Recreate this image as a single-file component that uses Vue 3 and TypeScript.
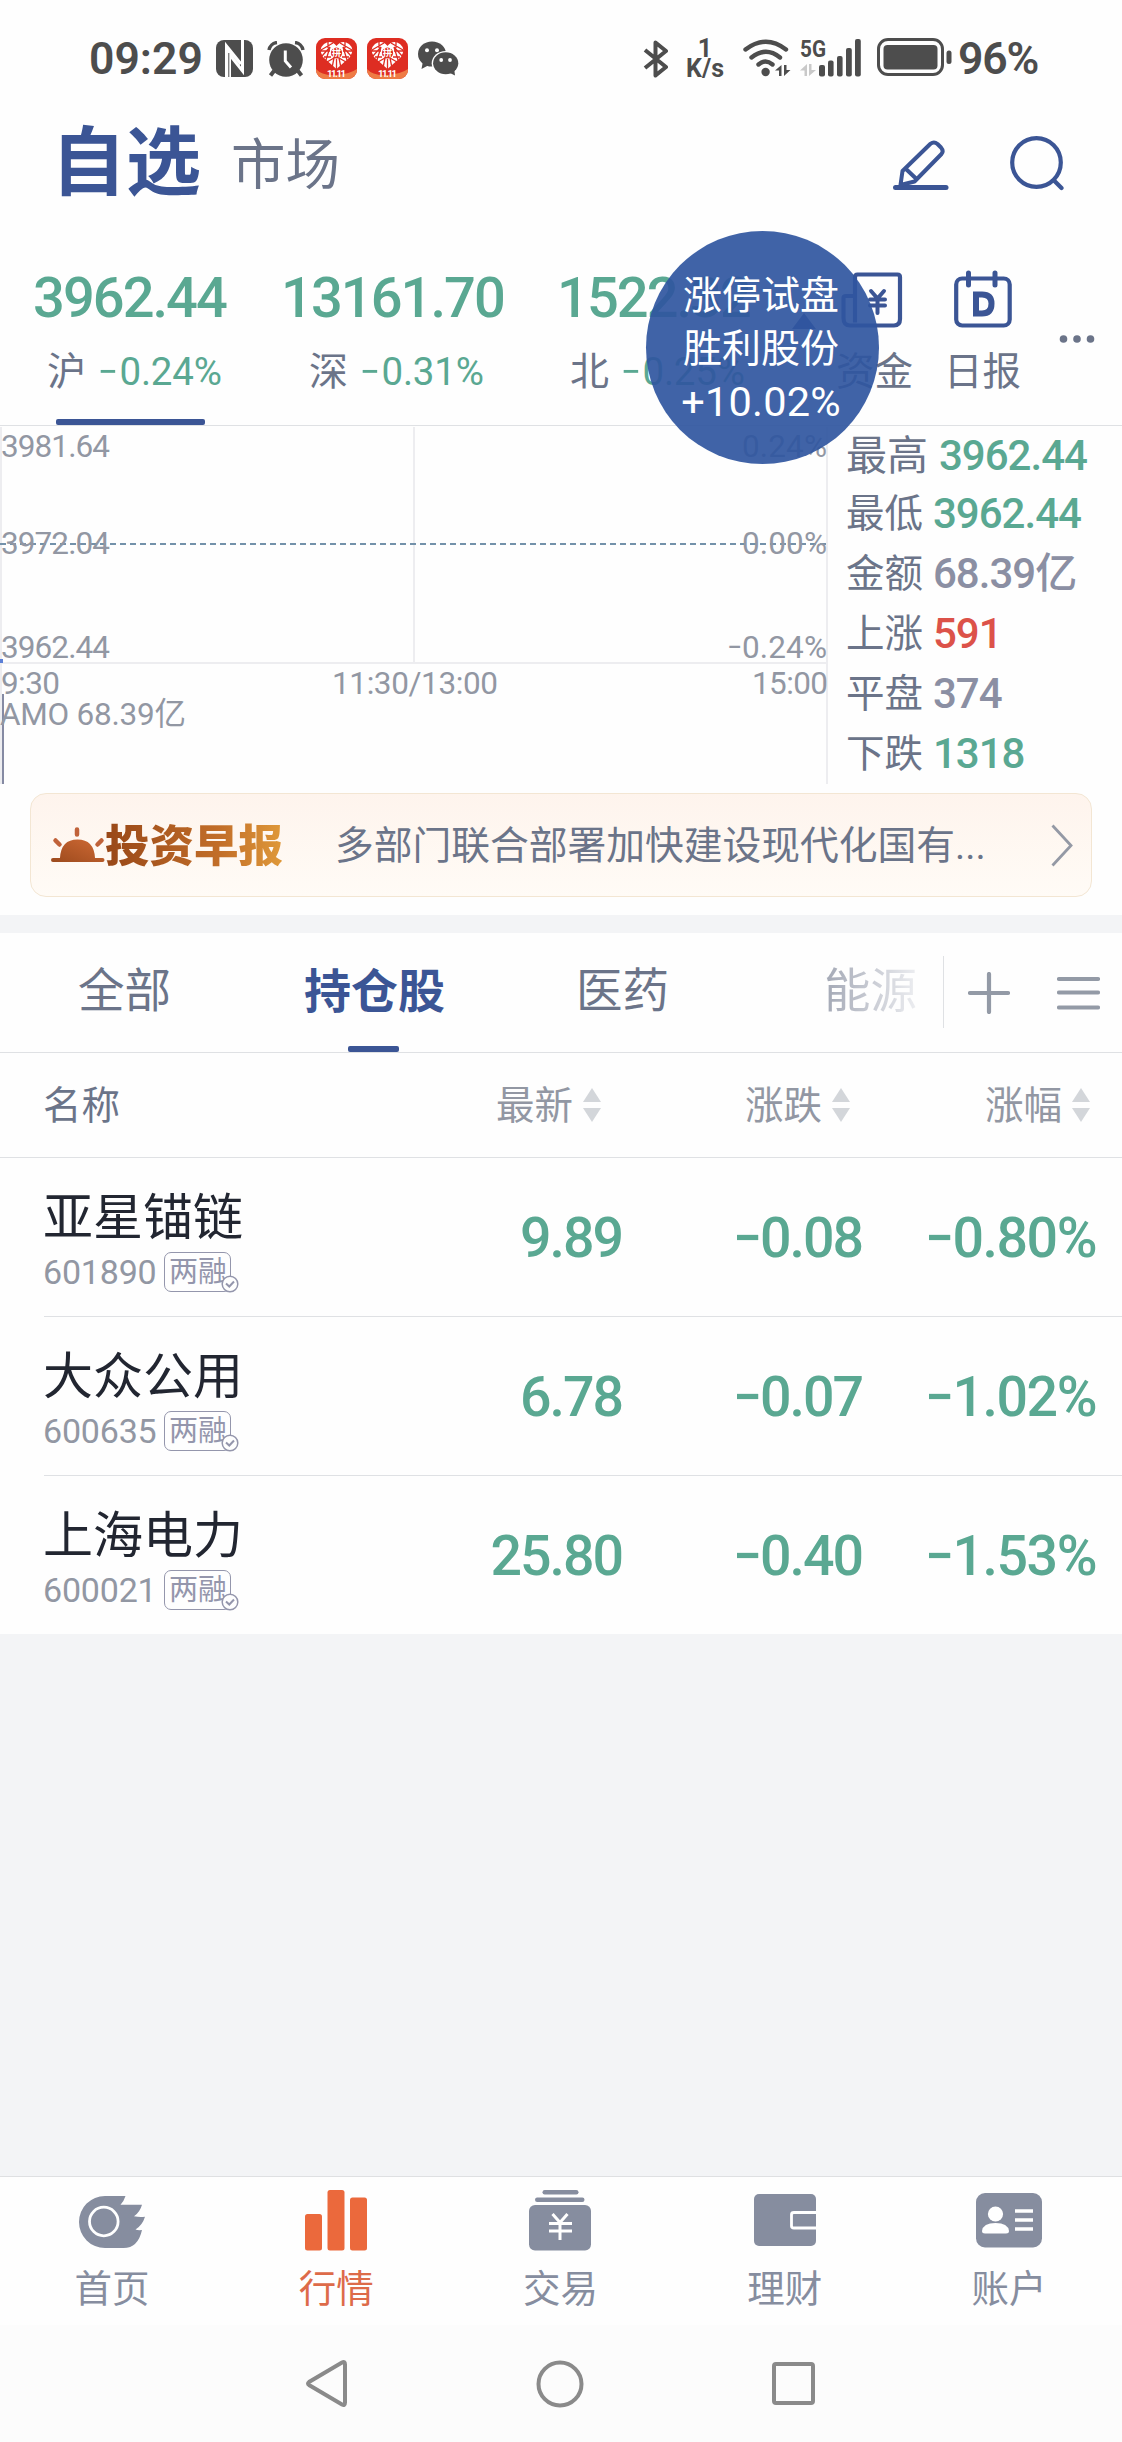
<script setup lang="ts">
interface IndexQuote { price: string; name: string; pct: string; cls: string }
interface Stat { label: string; value: string; tone: string }
interface Stock { name: string; code: string; last: string; diff: string; pct: string }

const indices: IndexQuote[] = [
  { price: '3962.44', name: '沪', pct: '0.24%', cls: 'ix-a' },
  { price: '13161.70', name: '深', pct: '0.31%', cls: 'ix-b' },
  { price: '1522.32', name: '北', pct: '0.25%', cls: 'ix-c' },
]

const stats: Stat[] = [
  { label: '最高', value: '3962.44', tone: 'down' },
  { label: '最低', value: '3962.44', tone: 'down' },
  { label: '金额', value: '68.39亿', tone: 'flat' },
  { label: '上涨', value: '591', tone: 'up' },
  { label: '平盘', value: '374', tone: 'flat' },
  { label: '下跌', value: '1318', tone: 'down' },
]

const columns = ['最新', '涨跌', '涨幅']

const stocks: Stock[] = [
  { name: '亚星锚链', code: '601890', last: '9.89', diff: '0.08', pct: '0.80%' },
  { name: '大众公用', code: '600635', last: '6.78', diff: '0.07', pct: '1.02%' },
  { name: '上海电力', code: '600021', last: '25.80', diff: '0.40', pct: '1.53%' },
]
</script>

<template>
  <div class="page">
    <div class="status">
      <span class="time">09:29</span>
      <svg class="nfc" width="37" height="37" viewBox="0 0 37 37">
        <rect width="37" height="37" rx="8" fill="#4d4d4d" />
        <path d="M10.5 38V6L25 24M26.5-1V31L13.5 14.5V38" fill="none" stroke="#fff" stroke-width="3" />
        <path d="M12.8 13V38" stroke="#4d4d4d" stroke-width="1" />
      </svg>
      <svg class="alarm" width="38" height="36" viewBox="0 0 38 36">
        <circle cx="19" cy="19" r="16.8" fill="#4d4d4d" />
        <path d="M2 9A9 9 0 0 1 10 1.5M28 1.5A9 9 0 0 1 36 9" stroke="#4d4d4d" stroke-width="3.4" fill="none" />
        <path d="M7 30L3.5 34.5M31 30L34.5 34.5" stroke="#4d4d4d" stroke-width="4" />
        <path d="M18.3 9.5V20L24 26.5" fill="none" stroke="#fff" stroke-width="3" />
      </svg>
      <svg v-for="n in 2" :key="n" class="promo" width="41" height="41" viewBox="0 0 41 41">
        <rect width="41" height="41" rx="9" fill="#de2d22" />
        <path d="M0 31Q6 38 20 37T41 31V32A9 9 0 0 1 32 41H9A9 9 0 0 1 0 32Z" fill="#ee7b45" />
        <path d="M20.5 31L7 19Q2 11 8 6Q15 1 20.5 8Q26 1 33 6Q39 11 34 19Z" fill="#fff" />
        <path d="M5 12L17 5M24 5L36 12M6 18L14 9L10 22M35 18L27 9L31 22M4 13H14M27 13H37M12 3V10M29 3V10M11 24L18 20L16 30M30 24L23 20L25 30M20.5 21V31M8 19H15M26 19H33" fill="none" stroke="#de2d22" stroke-width="1.3" />
        <circle cx="20.5" cy="15" r="5.6" fill="#de2d22" />
        <text x="20.5" y="18.4" font-size="9.5" font-weight="700" fill="#fff" text-anchor="middle">拼</text>
        <text x="20.5" y="39" font-size="9.5" font-weight="700" fill="#fff" text-anchor="middle" textLength="19">11.11</text>
      </svg>
      <svg class="wechat" width="41" height="36" viewBox="0 0 41 36">
        <ellipse cx="14" cy="13" rx="14" ry="12.6" fill="#4d4d4d" />
        <path d="M5 20L3.5 28L11 24Z" fill="#4d4d4d" />
        <ellipse cx="27.7" cy="22.3" rx="14" ry="12.3" fill="#fff" />
        <ellipse cx="27.7" cy="22.3" rx="12.6" ry="11" fill="#4d4d4d" />
        <path d="M30 31L37 34.5L36 27Z" fill="#4d4d4d" />
        <g fill="#fff"><circle cx="9" cy="9.2" r="2" /><circle cx="19" cy="9.2" r="2" /><circle cx="23.2" cy="19" r="1.9" /><circle cx="32" cy="19" r="1.9" /></g>
      </svg>
      <svg class="bt" width="26" height="38" viewBox="0 0 26 38">
        <path d="M2 10L23 27L12.5 35.5V2.5L23 11L2 28" fill="none" stroke="#4d4d4d" stroke-width="4" stroke-linejoin="round" />
      </svg>
      <div class="rate"><span>1</span><span>K/s</span></div>
      <svg class="wifi" width="48" height="38" viewBox="0 0 48 38">
        <g fill="none" stroke="#4d4d4d" stroke-width="4.4" stroke-linecap="round">
          <path d="M2.5 10.5Q23 -5 43 10.5M8.5 18.5Q23 7 37 18.5M15.5 25.5Q22.5 19.5 29.5 25.5" />
        </g>
        <circle cx="22.6" cy="33" r="4.2" fill="#4d4d4d" />
        <path d="M38.5 26V37H36V31.5H32ZM41 26V37L47.5 31H43.5V26Z" fill="#4d4d4d" />
      </svg>
      <svg class="cell" width="62" height="38" viewBox="0 0 62 38">
        <text x="0" y="18" font-size="24.500" font-weight="700" fill="#4d4d4d" textLength="26" lengthAdjust="spacingAndGlyphs">5G</text>
        <path d="M7 25V37H4.500V31.500H0ZM9 25V37L16 31H11.500V25Z" fill="#c9c9c9" />
        <g fill="#4d4d4d">
          <rect x="19" y="26" width="6" height="11.500" rx="2" /><rect x="28" y="21.500" width="5.600" height="16" rx="2" />
          <rect x="37" y="17" width="5.600" height="20.500" rx="2" /><rect x="46" y="9" width="5.800" height="28.500" rx="2" />
          <rect x="55" y="0" width="5.800" height="37.500" rx="2" />
        </g>
      </svg>
      <svg class="battery" width="76" height="38" viewBox="0 0 76 38">
        <rect x="1.500" y="1.500" width="64" height="35" rx="9.500" fill="none" stroke="#4d4d4d" stroke-width="3" />
        <rect x="6.500" y="7" width="54" height="24.500" rx="4" fill="#4d4d4d" />
        <rect x="69.500" y="12.500" width="5" height="13.500" rx="2.500" fill="#4d4d4d" />
      </svg>
      <span class="level">96%</span>
    </div>

    <header class="head">
      <span class="title">自选</span>
      <span class="subtitle">市场</span>
      <svg class="pen" width="56" height="51" viewBox="0 0 56 51">
        <g fill="none" stroke="#3b5595" stroke-linejoin="round" stroke-linecap="round">
          <path d="M2.500 47.500H53" stroke-width="5" />
          <path d="M7.500 45L9.500 31L37.500 3.800Q41 1 44.500 4L48 7.500Q51 11 48.500 14L21.500 41.500Z M13 29L23.500 39" stroke-width="4" />
        </g>
      </svg>
      <svg class="search" width="54" height="55" viewBox="0 0 54 55">
        <circle cx="26.500" cy="26.500" r="24.300" fill="none" stroke="#3b5595" stroke-width="4.200" />
        <path d="M44 44.500L51.500 52" stroke="#3b5595" stroke-width="4.200" stroke-linecap="round" />
      </svg>
    </header>

    <section class="indices">
      <div v-for="q in indices" :key="q.name" class="index" :class="q.cls">
        <div class="price">{{ q.price }}</div>
        <div class="sub"><span class="mk">{{ q.name }}</span><span class="pct"><i class="minus">−</i>{{ q.pct }}</span></div>
      </div>
      <svg class="tri" width="24" height="16" viewBox="0 0 24 16"><path d="M12 0L24 16H0Z" fill="#3b5595" /></svg>
      <div class="tool fund">
        <svg width="62" height="57" viewBox="0 0 62 57">
          <path d="M14 51.500V6Q14 3.500 16.500 3.500H56.500Q59 3.500 59 6V48Q59 54.500 53 54.500H9Q2.500 54.500 2.500 47V27Q2.500 25 5 25H14" fill="none" stroke="#3b5595" stroke-width="4.200" />
          <path d="M30 20L36.500 27.500L43 20M36.500 27.500V42M29 28.500H44M29 34.500H44" fill="none" stroke="#3b5595" stroke-width="4" stroke-linecap="round" />
        </svg>
        <span>资金</span>
      </div>
      <div class="tool daily">
        <svg width="58" height="58" viewBox="0 0 58 58">
          <rect x="2.200" y="8.500" width="53.500" height="47" rx="6" fill="none" stroke="#3b5595" stroke-width="4.200" />
          <path d="M14.500 3V15M41 3V15" stroke="#3b5595" stroke-width="5" stroke-linecap="round" />
          <path d="M22 24.500H28Q37.500 24.500 37.500 33.500Q37.500 43.500 28 43.500H22Z" fill="none" stroke="#3b5595" stroke-width="6" />
        </svg>
        <span>日报</span>
      </div>
      <svg class="more" width="36" height="8" viewBox="0 0 36 8"><g fill="#6b7489"><circle cx="4.500" cy="4" r="3.800" /><circle cx="18" cy="4" r="3.800" /><circle cx="31.500" cy="4" r="3.800" /></g></svg>
      <div class="bubble"><span>涨停试盘</span><span>胜利股份</span><span class="gain">+10.02%</span></div>
    </section>

    <section class="market">
      <svg class="chart" width="830" height="358" viewBox="0 426 830 358">
        <g stroke="#ededf0" stroke-width="2" fill="none">
          <path d="M1 427V784M414 427V663M0 663H828M827 427V784" />
        </g>
        <path d="M0 544H826" stroke="#7391aa" stroke-width="2" stroke-dasharray="6 4" />
        <rect x="0" y="659" width="3" height="4" fill="#5b7fd6" />
        <path d="M3 694V784" stroke="#858aa3" stroke-width="2" />
        <g class="axis">
          <text x="1" y="456.500" textLength="109">3981.64</text>
          <text x="1" y="554" textLength="109">3972.04</text>
          <text x="1" y="657.500" textLength="109">3962.44</text>
          <text x="1" y="694" textLength="59">9:30</text>
          <text x="332" y="694" textLength="166">11:30/13:00</text>
          <text x="752" y="694" textLength="76">15:00</text>
          <text x="0" y="725" textLength="186">AMO 68.39亿</text>
          <text x="742" y="456.500" textLength="85">0.24%</text>
          <text x="742" y="554" textLength="85">0.00%</text>
          <text x="742" y="657.500" textLength="85">0.24%</text>
          <text x="727" y="657.500" textLength="15" lengthAdjust="spacingAndGlyphs">−</text>
        </g>
      </svg>
      <dl class="stats">
        <div v-for="s in stats" :key="s.label"><dt>{{ s.label }}</dt><dd :class="s.tone">{{ s.value }}</dd></div>
      </dl>
    </section>

    <section class="news">
      <svg width="54" height="36" viewBox="0 0 54 36">
        <defs><linearGradient id="sun" x1="0" y1="1" x2="1" y2="0"><stop offset="0" stop-color="#9c4a1d" /><stop offset="1" stop-color="#d06a35" /></linearGradient></defs>
        <path d="M9 31Q10 12.500 26.500 12.500T44 31H51.500Q53.500 31 53.500 33T51.500 35H2Q0 35 0 33T2 31Z" fill="url(#sun)" />
        <path d="M26 2.500V7.500M4.500 13.500L8.500 17.500M50.500 13.500L46.500 17.500" stroke="#c0623a" stroke-width="4.500" stroke-linecap="round" />
      </svg>
      <b>投资早报</b>
      <span class="headline">多部门联合部署加快建设现代化国有...</span>
      <svg class="chev" width="22" height="43" viewBox="0 0 22 43"><path d="M1.500 1.500L20 21.500L1.500 41.500" fill="none" stroke="#9499a5" stroke-width="2.800" /></svg>
    </section>

    <div class="strip"></div>

    <nav class="tabs">
      <span class="tab t1">全部</span>
      <span class="tab t2">持仓股</span>
      <span class="tab t3">医药</span>
      <span class="tab t4">能源</span>
      <i class="rule"></i>
      <svg class="plus" width="42" height="42" viewBox="0 0 42 42"><path d="M2 21H40M21 2V40" stroke="#939aa6" stroke-width="4.200" stroke-linecap="round" /></svg>
      <svg class="burger" width="43" height="34" viewBox="0 0 43 34"><path d="M2 3H41M2 16.500H41M2 31.500H41" stroke="#939aa6" stroke-width="4.200" stroke-linecap="round" /></svg>
    </nav>

    <div class="thead">
      <span class="nm">名称</span>
      <span v-for="c in columns" :key="c" class="col"><em>{{ c }}</em><svg width="18" height="34" viewBox="0 0 18 34"><path d="M9 0L18 14H0Z" fill="#d3d6da" /><path d="M9 34L18 20H0Z" fill="#d3d6da" /></svg></span>
    </div>

    <div class="list">
      <div v-for="s in stocks" :key="s.code" class="row">
        <div class="who">
          <div class="name">{{ s.name }}</div>
          <div class="meta">
            <span class="code">{{ s.code }}</span>
            <span class="badge">两融<svg width="18" height="18" viewBox="0 0 18 18"><circle cx="9" cy="9" r="7.800" fill="#fefefe" stroke="#9496ac" stroke-width="1.500" /><path d="M5 8.500L8.300 11.500L13 6.500" fill="none" stroke="#9496ac" stroke-width="2" /></svg></span>
          </div>
        </div>
        <span class="num">{{ s.last }}</span>
        <span class="num"><i class="minus">−</i>{{ s.diff }}</span>
        <span class="num wide"><i class="minus">−</i>{{ s.pct }}</span>
      </div>
    </div>

    <div class="blank"></div>

    <nav class="dock">
      <div>
        <svg width="66" height="62" viewBox="0 0 66 62">
          <path d="M26 7H46.500Q45 12 41.500 15.700H63Q61 23 55 27.300Q61 28.500 66 27.700Q63.500 36 56.500 40.500Q59 41.500 63 41Q59 59 44.500 59H26A26 26 0 0 1 26 7Z" fill="#868d9f" />
          <circle cx="24.800" cy="32.500" r="14.300" fill="none" stroke="#fff" stroke-width="2.800" />
        </svg>首页
      </div>
      <div class="on">
        <svg width="62" height="62" viewBox="0 0 62 62" fill="#eb693c">
          <rect x="0" y="25" width="17" height="36.500" rx="2.500" /><rect x="22.500" y="1" width="17" height="60.500" rx="2.500" /><rect x="45" y="8.500" width="17" height="53" rx="2.500" />
        </svg>行情
      </div>
      <div>
        <svg width="62" height="62" viewBox="0 0 62 62" fill="#868d9f">
          <rect x="13.500" y="1" width="36" height="4.500" rx="2.200" /><rect x="6" y="8.500" width="49.500" height="4.500" rx="2.200" /><rect y="16" width="62" height="45.500" rx="6" />
          <path d="M23.500 25L31 33.500L38.500 25M31 33.500V51M20 34.500H43M20 42H43" fill="none" stroke="#fff" stroke-width="3" />
        </svg>交易
      </div>
      <div>
        <svg width="62" height="62" viewBox="0 0 62 62">
          <rect y="5" width="62" height="52" rx="5" fill="#868d9f" />
          <path d="M64 23.500H40Q37.500 23.500 37.500 25.500V37Q37.500 39 40 39H64" fill="none" stroke="#fff" stroke-width="2.800" />
        </svg>理财
      </div>
      <div>
        <svg width="66" height="62" viewBox="0 0 66 62">
          <rect y="4" width="66" height="54.500" rx="9" fill="#868d9f" />
          <circle cx="19.500" cy="25" r="7.600" fill="#fff" /><path d="M6 42Q7 34 19.500 34T33 42Q33 44.500 30 44.500H9Q6 44.500 6 42Z" fill="#fff" />
          <path d="M39 22H57M39 31H57M39 40H57" stroke="#fff" stroke-width="3.500" />
        </svg>账户
      </div>
    </nav>

    <div class="sys">
      <svg width="41" height="47" viewBox="0 0 41 47"><path d="M36 2.500Q39 1 39 4.500V42.500Q39 46 36 44.500L3 25Q1 23.500 3 22Z" fill="none" stroke="#8a8a8a" stroke-width="4" /></svg>
      <svg width="48" height="48" viewBox="0 0 48 48"><circle cx="24" cy="24" r="21.500" fill="none" stroke="#8a8a8a" stroke-width="4" /></svg>
      <svg width="43" height="43" viewBox="0 0 43 43"><rect x="2" y="2" width="39" height="39" rx="2" fill="none" stroke="#8a8a8a" stroke-width="4" /></svg>
    </div>
  </div>
</template>

<style>
body { margin: 0; background: #fefefe; }
</style>

<style scoped>
.page {
  width: 1122px; height: 2442px; overflow: hidden; display: flex; flex-direction: column;
  background: #fefefe; color: #6b7489; font-family: Roboto, "Noto Sans CJK SC", sans-serif;
}
.page > * { flex: none; box-sizing: border-box; }
svg { display: block; flex: none; }
i, em { font-style: normal; }
.minus { display: inline-block; transform: scaleX(.92); margin-left: -.06em; margin-right: -.02em; }

.status { height: 116px; display: flex; align-items: flex-start; padding: 38px 0 0 89px; }
.time { width: 127px; font-size: 44.500px; font-weight: 600; line-height: 43px; color: #4d4d4d; }
.nfc { margin-top: 2px; }
.alarm { margin: 3px 0 0 14px; }
.promo { margin-left: 10.500px; }
.wechat { margin: 3px 0 0 10px; }
.bt { margin: 2px 0 0 184px; }
.rate { width: 42px; margin: 1px 0 0 15px; display: flex; flex-direction: column; align-items: center; font-size: 25px; line-height: 20px; font-weight: 700; color: #4d4d4d; }
.wifi { margin: 1px 0 0 17px; }
.cell { margin: 1px 0 0 9px; overflow: visible; }
.battery { margin: 0 0 0 15px; }
.level { margin-left: 5px; font-size: 44.500px; line-height: 43px; font-weight: 600; color: #4d4d4d; letter-spacing: -1.200px; }

.head { height: 115px; display: flex; align-items: flex-start; padding-left: 51px; }
.title { width: 180px; font-size: 75px; line-height: 94px; font-weight: 700; color: #3b5595; }
.subtitle { width: 662px; font-size: 54.500px; line-height: 99px; }
.pen { margin-top: 24px; }
.search { margin: 20px 0 0 61px; }

.indices { position: relative; display: flex; height: 195px; border-bottom: 1px solid #dfe1e4; }
.index { box-sizing: border-box; height: 195px; padding-top: 40px; }
.ix-a { width: 250px; padding-left: 33px; position: relative; }
.ix-a::after { content: ""; position: absolute; left: 56px; bottom: 1px; width: 149px; height: 6px; border-radius: 2px; background: #3b5595; }
.ix-b { width: 272px; padding-left: 31px; }
.ix-c { width: 270px; padding-left: 35px; }
.price { font-size: 56px; line-height: 55px; font-weight: 500; letter-spacing: -1.950px; color: #5aa892; white-space: nowrap; }
.sub { display: flex; line-height: 44px; margin-top: 24px; white-space: nowrap; }
.mk { font-size: 39px; width: 51px; }
.ix-a .mk { margin-left: 14px; }
.ix-b .mk { margin-left: 28px; }
.ix-c .mk { margin-left: 13px; }
.pct { font-size: 38.500px; letter-spacing: -.200px; color: #5aa892; line-height: 44px; }
.pct .minus { margin-left: -.03em; margin-right: .02em; }
.tri { margin-top: 82px; }
.tool { display: flex; flex-direction: column; align-items: center; font-size: 38.500px; line-height: 44px; white-space: nowrap; }
.tool span { margin-top: 22px; }
.fund { width: 77px; margin: 40px 0 0 20px; }
.fund svg { margin-left: -6px; }
.daily { width: 77px; margin: 39px 0 0 31px; }
.more { margin: 104px 0 0 38px; }
.bubble {
  position: absolute; left: 646px; top: 0; width: 233px; height: 233px; border-radius: 50%; z-index: 2;
  background: rgba(48, 86, 160, .92); color: #fff; display: flex; flex-direction: column; align-items: center;
  box-sizing: border-box; padding: 39px 3px 0 0; font-size: 39px; line-height: 53px;
}
.gain { font-size: 41.500px; letter-spacing: .200px; line-height: 51px; }

.market { height: 358px; display: flex; }
.axis text { font-size: 31.500px; fill: #9297a3; }
.stats { margin: 1px 0 0 16px; padding: 0; }
.stats div { display: flex; height: 60px; align-items: center; }
.stats div:first-child { height: 57px; }
.stats div:first-child dt { font-size: 41px; width: 93px; }
.stats dt { width: 87px; font-size: 38.500px; line-height: 50px; }
.stats dd { margin: 0; font-size: 42px; line-height: 50px; font-weight: 500; letter-spacing: -1px; }
.down { color: #5aa892; }
.up { color: #dc5249; }
.flat { color: #8b8fa3; }

.news {
  height: 104px; margin: 9px 30px 18px; border: 1.500px solid #f3e6d3; border-radius: 16px; display: flex; align-items: center;
  padding-left: 20px; background: linear-gradient(#fef4ed, #fffbf6);
}
.news b {
  width: 230px; padding-top: 4px; font-size: 44.500px; line-height: 60px; font-weight: 900;
  background: linear-gradient(90deg, #984718, #c26e29 50%, #de9739 76%); -webkit-background-clip: text; background-clip: text; color: transparent;
}
.headline { width: 716px; padding-top: 2px; font-size: 38.750px; line-height: 60px; white-space: nowrap; }

.strip { height: 18px; background: #f3f4f6; }

.tabs { height: 120px; border-bottom: 1px solid #dfe1e4; display: flex; align-items: flex-start; font-size: 46.500px; line-height: 117px; }
.tab { height: 119px; }
.t1 { margin-left: 78px; width: 226px; }
.t2 { position: relative; width: 272px; font-weight: 700; color: #3b5595; font-size: 47px; }
.t2::after { content: ""; position: absolute; left: 44px; bottom: 0; width: 51px; height: 6px; border-radius: 2px; background: #3b5595; }
.t3 { width: 248px; }
.t4 { width: 95px; background: linear-gradient(90deg, #a3a8b5, #eeeff2); -webkit-background-clip: text; background-clip: text; color: transparent; }
.rule { width: 1px; height: 72px; margin: 23px 0 0 24px; background: #dfe1e4; }
.plus { margin: 39px 0 0 24px; }
.burger { margin: 43px 0 0 47px; }

.thead { height: 105px; border-bottom: 1px solid #dfe1e4; display: grid; grid-template-columns: 453px 249px 240px 148px; align-items: center; font-size: 38.500px; line-height: 60px; }
.nm { padding: 2px 0 0 43px; }
.thead .col { display: flex; align-items: center; justify-content: flex-end; color: #9297a3; white-space: nowrap; }
.thead .col em { padding-top: 2px; }
.thead .col:nth-child(2) { padding-right: 101px; }
.thead .col:nth-child(3) { padding-right: 92px; }
.col svg { margin-left: 10px; }

.row { height: 159px; margin-left: 44px; display: grid; grid-template-columns: 328px 250px 240px 234px; border-bottom: 1px solid #dfe1e4; box-sizing: border-box; }
.row:last-child { border-bottom: 0; height: 158px; }
.name { font-size: 50px; line-height: 60px; color: #222631; margin: 29.500px 0 0 -1px; }
.meta { display: flex; margin-top: 1px; }
.code { width: 121px; margin-left: -1px; font-size: 34px; line-height: 46px; color: #9297a3; letter-spacing: -.200px; }
.badge { position: relative; box-sizing: border-box; width: 67px; height: 40px; margin-top: 3px; border: 1.500px solid #9496ac; border-radius: 7px; padding-left: 4px; font-size: 29px; line-height: 38px; color: #9496ac; white-space: nowrap; }
.badge svg { position: absolute; right: -9px; bottom: -2px; }
.num { text-align: right; font-size: 55.500px; line-height: 161px; font-weight: 500; letter-spacing: -2px; color: #5aa892; white-space: nowrap; }
.wide { letter-spacing: -1.500px; }

.blank { height: 543px; background: #f3f4f6; border-bottom: 1px solid #dfe0e2; }

.dock { height: 148px; padding-right: 1px; display: grid; grid-template-columns: repeat(5, 1fr); background: #fefefe; }
.dock div { display: flex; flex-direction: column; align-items: center; padding-top: 12px; font-size: 37.500px; line-height: 50px; color: #868d9f; }
.dock svg { margin-bottom: 12.500px; }
.dock .on { color: #dd6b49; }

.sys { height: 117px; background: #fcfcfc; display: flex; padding: 35px 0 0 306px; }
.sys svg:nth-child(2) { margin-left: 189px; }
.sys svg:nth-child(3) { margin-left: 188px; margin-top: 2px; }
</style>
